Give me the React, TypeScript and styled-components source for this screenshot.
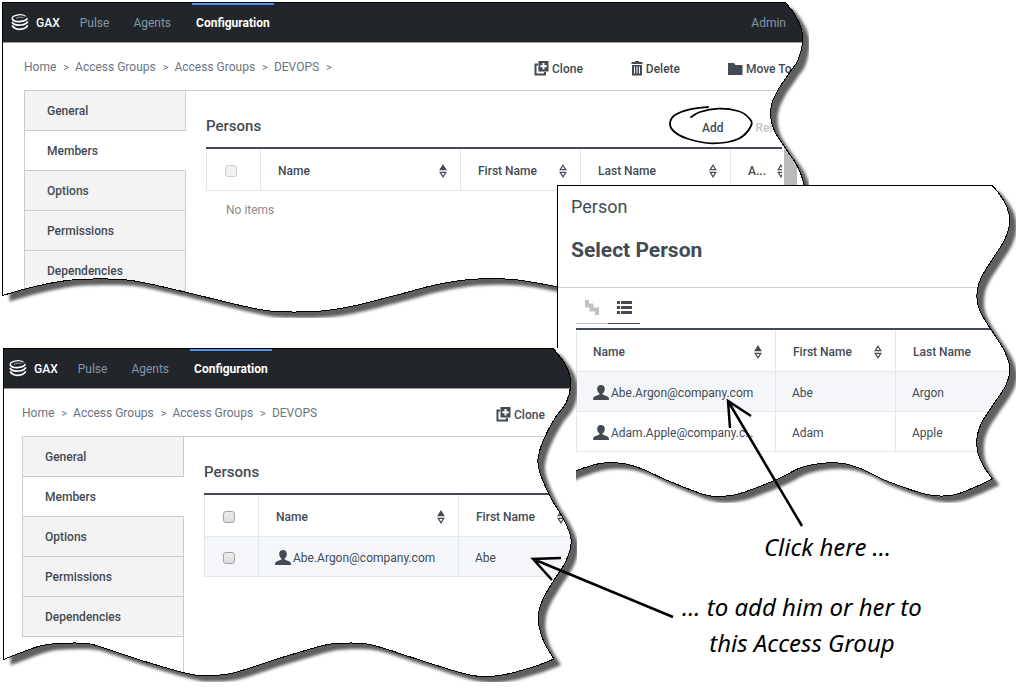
import React from 'react';
import styled, { createGlobalStyle, css } from 'styled-components';

const ink = '#434a54';
const rule = '#cccccc';
const cellRule = '#e2e6ee';

const GlobalStyle = createGlobalStyle`
  *, *::before, *::after { box-sizing: border-box; }
  body {
    margin: 0;
    background: #ffffff;
    color: ${ink};
    font-family: Roboto, "Liberation Sans", sans-serif;
    font-size: 12px;
    line-height: 16px;
  }
  button { font: inherit; color: inherit; background: none; border: 0; padding: 0; cursor: pointer; }
  a { color: inherit; text-decoration: none; }
  h1, h2, ul, ol, p { margin: 0; padding: 0; }
  ul, ol { list-style: none; }
`;

/* ---------- torn paper geometry ---------- */

type Point = [number, number];

/* Smooth curve through the points, without the opening move. */
const curve = (points: Point[]) => {
  let d = '';
  for (let i = 0; i < points.length - 1; i += 1) {
    const before = points[i - 1] ?? points[i];
    const from = points[i];
    const to = points[i + 1];
    const after = points[i + 2] ?? to;
    const c1 = [from[0] + (to[0] - before[0]) / 6, from[1] + (to[1] - before[1]) / 6];
    const c2 = [to[0] - (after[0] - from[0]) / 6, to[1] - (after[1] - from[1]) / 6];
    d += ` C${[...c1, ...c2, ...to].map((n) => n.toFixed(1)).join(' ')}`;
  }
  return d;
};

const stroke = (points: Point[]) => `M${points[0].join(' ')}${curve(points)}`;

const tornShape = (left: number, right: Point[], bottom: Point[]) =>
  `M${left} 0.5 L${right[0].join(' ')}${curve(right)}${curve([right[right.length - 1], ...bottom])} Z`;

const groupShape = tornShape(
  0.5,
  [[783.5, 0.5], [791, 10], [798, 23], [800.7, 38], [796, 58], [788, 70], [776, 88], [769.5, 103], [769, 117], [773, 130], [784.7, 148], [794.7, 163], [800.7, 178], [801, 190], [784, 222], [769, 258], [784, 293]],
  [[750, 303], [705, 309.5], [670, 307], [600, 293], [555, 284.7], [511, 277.5], [468, 277.5], [431, 283.5], [395, 293], [348, 304.7], [315, 309.3], [271, 309.3], [241, 304], [198, 293.7], [148, 282], [120, 277.5], [76, 277.5], [48, 281.3], [23, 287], [0.5, 293.5]],
);

const resultShape = tornShape(
  3.5,
  [[553.3, 0.5], [561, 10], [568, 22], [570.7, 37], [566, 55], [555, 70], [543, 93], [538.3, 109], [538.5, 119], [543, 133], [552, 152], [563, 170], [570.5, 188], [570.5, 200], [565, 215], [553, 233.7], [543, 251], [538.8, 264], [539, 278], [544, 294], [554, 311]],
  [[533, 319], [500, 327.4], [470, 327], [416.7, 311], [383, 300], [363, 295.5], [337, 295.5], [320, 298.3], [277, 311], [233, 325], [207, 327.5], [187, 325.5], [140, 312], [107, 301], [87, 295.5], [57, 295.5], [40, 298], [20, 305], [3.5, 311.5]],
);

const dialogShape = tornShape(
  0.5,
  [[435.3, 0.5], [443, 10], [450, 22], [452.6, 37], [448, 54], [436.3, 73], [425, 91], [420.5, 104], [420.5, 118], [425, 130], [434, 144.5], [447, 165], [452.5, 180], [452.5, 189], [448, 202], [436, 220], [425, 237], [420.4, 250], [420.5, 266], [426, 280], [435.3, 294]],
  [[416, 303], [395, 310.3], [370, 309.5], [328, 295.3], [306, 284.5], [286, 278.5], [263, 278.5], [243, 283], [223, 293], [196, 304], [175, 310.3], [150, 310.3], [111, 295.7], [86, 284.3], [66, 278.5], [43, 278.5], [19, 285.7], [0.5, 294]],
);

const Canvas = styled.main`
  position: relative;
  min-height: 691px;
  overflow: hidden;
`;

const SheetFrame = styled.section<{ $x: number; $y: number; $w: number; $h: number; $cut?: string }>`
  position: absolute;
  left: ${(p) => p.$x}px;
  top: ${(p) => p.$y}px;
  width: ${(p) => p.$w}px;
  height: ${(p) => p.$h}px;
  ${(p) => p.$cut && css`clip-path: ${p.$cut};`}
`;

const SheetLayer = styled.svg`
  position: absolute;
  left: 0;
  top: 0;
  overflow: hidden;
  pointer-events: none;
`;

const SheetContent = styled.div<{ $shape: string }>`
  position: relative;
  height: 100%;
  overflow: hidden;
  display: flex;
  flex-direction: column;
  background: #ffffff;
  clip-path: path('${(p) => p.$shape}');
`;

type SheetProps = {
  label: string;
  x: number;
  y: number;
  w: number;
  h: number;
  shape: string;
  cut?: string;
  children: React.ReactNode;
};

const Sheet = ({ label, x, y, w, h, shape, cut, children }: SheetProps) => {
  const blurId = `blur-${x}`;
  return (
    <SheetFrame aria-label={label} $x={x} $y={y} $w={w} $h={h} $cut={cut}>
      <SheetLayer width={w + 6} height={h + 6} aria-hidden="true">
        <filter id={blurId} x="-5%" y="-5%" width="110%" height="110%">
          <feGaussianBlur stdDeviation="1.4" />
        </filter>
        <path d={shape} fill="#5f5f5f" transform="translate(7 6)" filter={`url(#${blurId})`} />
      </SheetLayer>
      <SheetContent $shape={shape}>{children}</SheetContent>
      <SheetLayer width={w + 6} height={h + 6} aria-hidden="true">
        <path d={shape} fill="none" stroke="#000000" shapeRendering="crispEdges" />
      </SheetLayer>
    </SheetFrame>
  );
};

/* ---------- icons ---------- */

const LogoIcon = () => (
  <svg width="18" height="17" viewBox="0 0 18 17" fill="none" stroke="#ffffff" aria-hidden="true">
    <path d="M14.500 2.200C12.600 .9 8.400 .4 5 1.300 1.600 2.200 .5 4 1.600 5.400" strokeWidth="1.200" />
    <path d="M5 4.600c.8-1.300 4.500-2 7.500-.9" strokeWidth="1" stroke="#9a9da1" />
    <path d="M14.500 2.200c1.300.7 1.700 1.700 1.500 2.600" strokeWidth="1" stroke="#6d7176" />
    <path d="M1.300 4.800c1.200 2.400 5.500 3 8.700 2.600 3.200-.4 5.600-1.500 6.400-3" strokeWidth="1.800" />
    <path d="M1 8c1.400 2.600 5.600 3.400 9 3 3.200-.3 6-1.600 6.800-3.600" strokeWidth="1.700" />
    <path d="M1.200 11.400c1.600 3 5.400 4.200 8.800 3.800 3.200-.4 5.800-1.900 6.600-4" strokeWidth="1.800" />
  </svg>
);

const CloneIcon = () => (
  <svg width="15" height="15" viewBox="0 0 15 15" aria-hidden="true">
    <path d="M4 3.500H1.500v10h9.500V11" fill="none" stroke={ink} strokeWidth="2" />
    <path d="M4.500 0h10v10.500h-10z" fill={ink} />
    <path d="M9.500 2v6.500M6.300 5.200h6.500" stroke="#ffffff" strokeWidth="2" />
  </svg>
);

const TrashIcon = () => (
  <svg width="12" height="15" viewBox="0 0 12 15" aria-hidden="true">
    <path d="M4 0h4v1h3.500v2H.5V1H4zM1 4h10v10.500H1z" fill={ink} />
    <path d="M3.500 5.500v7M6 5.500v7M8.500 5.500v7" stroke="#ffffff" strokeWidth="1" />
  </svg>
);

const FolderIcon = () => (
  <svg width="15" height="12" viewBox="0 0 15 12" aria-hidden="true">
    <path d="M0 0h6l1.500 2H14.500v10H0z" fill={ink} />
  </svg>
);

const UserIcon = () => (
  <svg width="16" height="15" viewBox="0 0 16 15" aria-hidden="true">
    <path d="M8 0c2.300 0 3.800 1.600 3.800 3.900 0 1.900-.9 3.600-2.200 4.400v1.200l4.900 2c1 .5 1.500 1.400 1.500 3.500H0c0-2.100.5-3 1.500-3.500l4.900-2V8.300C5.100 7.500 4.200 5.800 4.200 3.900 4.200 1.600 5.700 0 8 0z" fill={ink} />
  </svg>
);

const TreeIcon = () => (
  <svg width="14" height="15" viewBox="0 0 14 15" aria-hidden="true">
    <path d="M2 0v5.500h4.500v4h5.500V15" fill="none" stroke="#bfc1c4" strokeWidth="4" />
  </svg>
);

const ListIcon = () => (
  <svg width="15" height="13" viewBox="0 0 15 13" fill={ink} aria-hidden="true">
    <path d="M0 0h3v3H0zM4 0h11v3H4zM0 5h3v3H0zM4 5h11v3H4zM0 10h3v3H0zM4 10h11v3H4z" />
  </svg>
);

const SortIcon = ({ ascending }: { ascending?: boolean }) => (
  <svg width="8" height="14" viewBox="0 0 8 14" stroke={ink} strokeWidth="1.200" aria-hidden="true">
    <path d="M4 1.200 6.800 5.600H1.200z" fill={ascending ? ink : 'none'} />
    <path d="M1.200 8.400h5.600L4 12.800z" fill="none" />
  </svg>
);

/* ---------- application header ---------- */

const TopBar = styled.header`
  display: flex;
  align-items: center;
  flex: none;
  height: 41px;
  padding: 1px 17px 0 9px;
  border-bottom: 1px solid #9b9b9b;
  background: #22252a;
  color: #8496ab;
`;

const Brand = styled.a`
  display: flex;
  align-items: center;
  gap: 7px;
  margin-right: 8px;
  color: #ffffff;
  font-weight: 500;
`;

const MainNav = styled.nav`
  display: flex;
  height: 100%;
`;

const NavLink = styled.a<{ $active?: boolean }>`
  display: flex;
  align-items: center;
  padding: 0 12px;
  border-top: 2px solid transparent;
  border-bottom: 2px solid transparent;
  ${(p) => p.$active && css`
    margin-left: 9px;
    padding: 0 4px;
    border-top-color: #4f8ff0;
    color: #ffffff;
    font-weight: 700;
  `}
`;

const Account = styled.a`
  margin-left: auto;
`;

const ToolRow = styled.div`
  display: flex;
  align-items: center;
  flex: none;
  height: 47px;
  padding: 2px 0 0 22px;
`;

const Breadcrumbs = styled.ol<{ $space: number }>`
  display: flex;
  flex: 0 0 ${(p) => p.$space}px;
  color: #6b7480;
`;

const Crumb = styled.li`
  white-space: nowrap;
  &:not(:last-child)::after {
    content: '>';
    margin: 0 6px 0 7px;
    font-size: 11px;
  }
`;

const Actions = styled.div`
  display: flex;
  gap: 48px;
  padding-top: 2px;
`;

const ActionButton = styled.button`
  display: flex;
  align-items: center;
  flex: none;
  gap: 3px;
  font-weight: 500;
  white-space: nowrap;
`;

const Body = styled.div`
  display: flex;
  flex: 1;
  margin-left: 22px;
  border-top: 1px solid ${rule};
`;

const SideMenu = styled.ul`
  display: flex;
  flex-direction: column;
  flex: 0 0 162px;
  &::after {
    content: '';
    flex: 1;
    border-right: 1px solid ${rule};
  }
`;

const SideItem = styled.li<{ $active?: boolean }>`
  display: flex;
  align-items: center;
  height: 40px;
  padding-left: 22px;
  border: 1px solid ${rule};
  border-top: 0;
  ${(p) => p.$active && css`border-right-color: transparent;`}
  background: ${(p) => (p.$active ? '#ffffff' : '#f3f3f3')};
  font-weight: 500;
`;

const Panel = styled.div`
  flex: 1;
  min-width: 0;
  padding-left: 20px;
`;

const PanelHead = styled.div`
  display: flex;
  align-items: center;
  justify-content: space-between;
  height: 56px;
  padding-top: 14px;
`;

const PanelTitle = styled.h2`
  font-size: 15px;
  line-height: 20px;
  font-weight: 500;
`;

const PanelActions = styled.div`
  display: flex;
  gap: 32px;
  padding: 3px 4px 0 0;
`;

const TextButton = styled.button`
  font-weight: 500;
  &:disabled { color: #c4c6c9; cursor: default; }
`;

const TableArea = styled.div`
  display: flex;
`;

const TableView = styled.div`
  flex: 1;
  min-width: 0;
  overflow: hidden;
  border-top: 2px solid ${ink};
`;

const ScrollTrack = styled.div`
  flex: 0 0 13px;
  margin: 2px 6px 0 2px;
  background: #bababa;
`;

/* ---------- data table ---------- */

const Table = styled.table<{ $width: number }>`
  width: ${(p) => p.$width}px;
  table-layout: fixed;
  border-collapse: separate;
  border-spacing: 0;
`;

const cell = css`
  padding: 2px 16px 0;
  border-right: 1px solid ${cellRule};
  border-bottom: 1px solid ${cellRule};
  text-align: left;
  &:first-child { border-left: 1px solid ${cellRule}; }
`;

const HeadCell = styled.th`
  ${cell}
  height: 42px;
  padding-right: 13px;
  font-weight: 500;
  &:not(:first-child) { padding-left: 17px; }
`;

const HeadInner = styled.div`
  display: flex;
  align-items: center;
  justify-content: space-between;
  white-space: nowrap;
`;

const DataCell = styled.td`
  ${cell}
  height: 40px;
`;

const DataRow = styled.tr<{ $tinted?: boolean }>`
  background: ${(p) => (p.$tinted ? '#f4f6fa' : '#ffffff')};
`;

const EmptyCell = styled.td`
  height: 38px;
  padding: 0 20px;
  color: #8a8a8a;
`;

const PersonName = styled.a`
  display: flex;
  align-items: center;
  gap: 2px;
  svg { flex: none; }
  span { overflow: hidden; text-overflow: ellipsis; white-space: nowrap; }
`;

const SortButton = styled.button`
  display: flex;
`;

const Tick = styled.input`
  display: block;
  appearance: none;
  width: 12px;
  height: 12px;
  margin: 0 2px;
  border: 1px solid #a3a3a3;
  border-radius: 3px;
  background: linear-gradient(#ededed, #dcdcdc);
  &:disabled { border-color: #cfcfcf; background: #f1f1f1; }
`;

type Person = { user: string; first: string; last: string };
type Column = {
  title: string;
  width: number;
  ascending?: boolean;
  show: (person: Person) => React.ReactNode;
};

const nameColumn: Column = {
  title: 'Name',
  width: 200,
  ascending: true,
  show: (p) => <PersonName href="#"><UserIcon /><span>{p.user}</span></PersonName>,
};
const firstColumn: Column = { title: 'First Name', width: 120, show: (p) => p.first };
const lastColumn: Column = { title: 'Last Name', width: 150, show: (p) => p.last };
const moreColumn: Column = { title: 'A...', width: 68, show: () => null };

const abe: Person = { user: 'Abe.Argon@company.com', first: 'Abe', last: 'Argon' };
const adam: Person = { user: 'Adam.Apple@company.com', first: 'Adam', last: 'Apple' };

type PeopleTableProps = {
  columns: Column[];
  people: Person[];
  selectable?: boolean;
};

const PeopleTable = ({ columns, people, selectable }: PeopleTableProps) => {
  const span = columns.length + (selectable ? 1 : 0);
  const width = columns.reduce((sum, c) => sum + c.width, selectable ? 55 : 0);
  return (
    <Table $width={width}>
      <colgroup>
        {selectable && <col width={55} />}
        {columns.map((c) => <col key={c.title} width={c.width} />)}
      </colgroup>
      <thead>
        <tr>
          {selectable && (
            <HeadCell><Tick type="checkbox" aria-label="Select all" disabled={people.length === 0} /></HeadCell>
          )}
          {columns.map((c) => (
            <HeadCell key={c.title}>
              <HeadInner>
                {c.title}
                <SortButton type="button" aria-label={`Sort by ${c.title}`}><SortIcon ascending={c.ascending} /></SortButton>
              </HeadInner>
            </HeadCell>
          ))}
        </tr>
      </thead>
      <tbody>
        {people.map((p, i) => (
          <DataRow key={p.user} $tinted={i % 2 === 0}>
            {selectable && <DataCell><Tick type="checkbox" aria-label={`Select ${p.user}`} /></DataCell>}
            {columns.map((c) => <DataCell key={c.title}>{c.show(p)}</DataCell>)}
          </DataRow>
        ))}
        {people.length === 0 && <tr><EmptyCell colSpan={span}>No items</EmptyCell></tr>}
      </tbody>
    </Table>
  );
};

/* ---------- access group window ---------- */

const sections = ['General', 'Members', 'Options', 'Permissions', 'Dependencies'];

type GroupWindowProps = {
  crumbs: string[];
  crumbSpace: number;
  columns: Column[];
  people: Person[];
  full?: boolean;
};

const GroupWindow = ({ crumbs, crumbSpace, columns, people, full }: GroupWindowProps) => (
  <>
    <TopBar>
      <Brand href="#"><LogoIcon />GAX</Brand>
      <MainNav aria-label="Main">
        <NavLink href="#">Pulse</NavLink>
        <NavLink href="#">Agents</NavLink>
        <NavLink href="#" $active>Configuration</NavLink>
      </MainNav>
      {full && <Account href="#">Admin</Account>}
    </TopBar>
    <ToolRow>
      <Breadcrumbs $space={crumbSpace}>
        {crumbs.map((c, i) => <Crumb key={i}><a href="#">{c}</a></Crumb>)}
      </Breadcrumbs>
      <Actions>
        <ActionButton type="button"><CloneIcon />Clone</ActionButton>
        {full && <ActionButton type="button"><TrashIcon />Delete</ActionButton>}
        {full && <ActionButton type="button"><FolderIcon />Move To</ActionButton>}
      </Actions>
    </ToolRow>
    <Body>
      <SideMenu>
        {sections.map((s) => (
          <SideItem key={s} $active={s === 'Members'}><a href="#">{s}</a></SideItem>
        ))}
      </SideMenu>
      <Panel>
        <PanelHead>
          <PanelTitle>Persons</PanelTitle>
          {full && (
            <PanelActions>
              <TextButton type="button">Add</TextButton>
              <TextButton type="button" disabled>Remove</TextButton>
            </PanelActions>
          )}
        </PanelHead>
        <TableArea>
          <TableView>
            <PeopleTable columns={columns} people={people} selectable />
          </TableView>
          {full && <ScrollTrack />}
        </TableArea>
      </Panel>
    </Body>
  </>
);

/* ---------- person picker ---------- */

const PickerHead = styled.header`
  height: 103px;
  flex: none;
  padding: 10px 14px 0;
  border-bottom: 1px solid ${rule};
`;

const PickerKind = styled.p`
  font-size: 18px;
  line-height: 24px;
`;

const PickerTitle = styled.h1`
  margin-top: 17px;
  font-size: 21px;
  line-height: 28px;
  font-weight: 700;
`;

const PickerBody = styled.div`
  padding-left: 19px;
`;

const ViewTabs = styled.div`
  display: flex;
  margin-bottom: 4px;
`;

const ViewTab = styled.button<{ $active?: boolean }>`
  display: flex;
  align-items: center;
  justify-content: center;
  width: 32px;
  height: 36px;
  padding-top: 4px;
  border-bottom: 1px solid ${(p) => (p.$active ? ink : '#bfc1c4')};
`;

/* ---------- annotations ---------- */

const InkLayer = styled.svg`
  position: absolute;
  left: 0;
  top: 0;
  pointer-events: none;
`;

const Note = styled.p<{ $x: number; $y: number }>`
  position: absolute;
  left: ${(p) => p.$x}px;
  top: ${(p) => p.$y}px;
  color: #000000;
  font-family: "Noto Sans", "Open Sans", sans-serif;
  font-style: italic;
  font-size: 24px;
  line-height: 36px;
  text-align: center;
  white-space: nowrap;
`;

const circleInk = stroke([
  [691, 117], [700, 112], [718, 108.7], [738, 111], [749, 118], [751, 126], [738, 139], [712, 143.3],
  [687, 138.5], [673.5, 131], [670, 123], [675, 115], [690, 109.3], [708, 107],
]);

const App = () => (
  <>
    <GlobalStyle />
    <Canvas>
      <Sheet label="Members before" x={2} y={2} w={801} h={310} shape={groupShape}>
        <GroupWindow
          crumbs={['Home', 'Access Groups', 'Access Groups', 'DEVOPS', '']}
          crumbSpace={510}
          columns={[nameColumn, firstColumn, lastColumn, moreColumn]}
          people={[]}
          full
        />
      </Sheet>
      <Sheet
        label="Select Person"
        x={557}
        y={185}
        w={453}
        h={312}
        shape={dialogShape}
        cut="polygon(0 0, 110% 0, 110% 110%, 19px 110%, 19px 163px, 0 163px)"
      >
        <PickerHead>
          <PickerKind>Person</PickerKind>
          <PickerTitle>Select Person</PickerTitle>
        </PickerHead>
        <PickerBody>
          <ViewTabs>
            <ViewTab type="button" aria-label="Tree view"><TreeIcon /></ViewTab>
            <ViewTab type="button" aria-label="List view" $active><ListIcon /></ViewTab>
          </ViewTabs>
          <TableView>
            <PeopleTable columns={[nameColumn, firstColumn, lastColumn]} people={[abe, adam]} />
          </TableView>
        </PickerBody>
      </Sheet>
      <Sheet label="Members after" x={0} y={348} w={571} h={328} shape={resultShape}>
        <GroupWindow
          crumbs={['Home', 'Access Groups', 'Access Groups', 'DEVOPS']}
          crumbSpace={474}
          columns={[nameColumn, firstColumn]}
          people={[abe]}
        />
      </Sheet>
      <InkLayer width="100%" height="100%" fill="none" stroke="#000000" aria-hidden="true">
        <path d={circleInk} strokeWidth="1.800" strokeLinecap="round" />
        <path d="M802 526 728 401M751 416 728 401 730 428" strokeWidth="2.500" />
        <path d="M673 617 533 559M561 558 533 559 552 580" strokeWidth="2.500" />
      </InkLayer>
      <Note $x={764} $y={529}>Click here ...</Note>
      <Note $x={682} $y={589}>... to add him or her to<br />this Access Group</Note>
    </Canvas>
  </>
);

export default App;
